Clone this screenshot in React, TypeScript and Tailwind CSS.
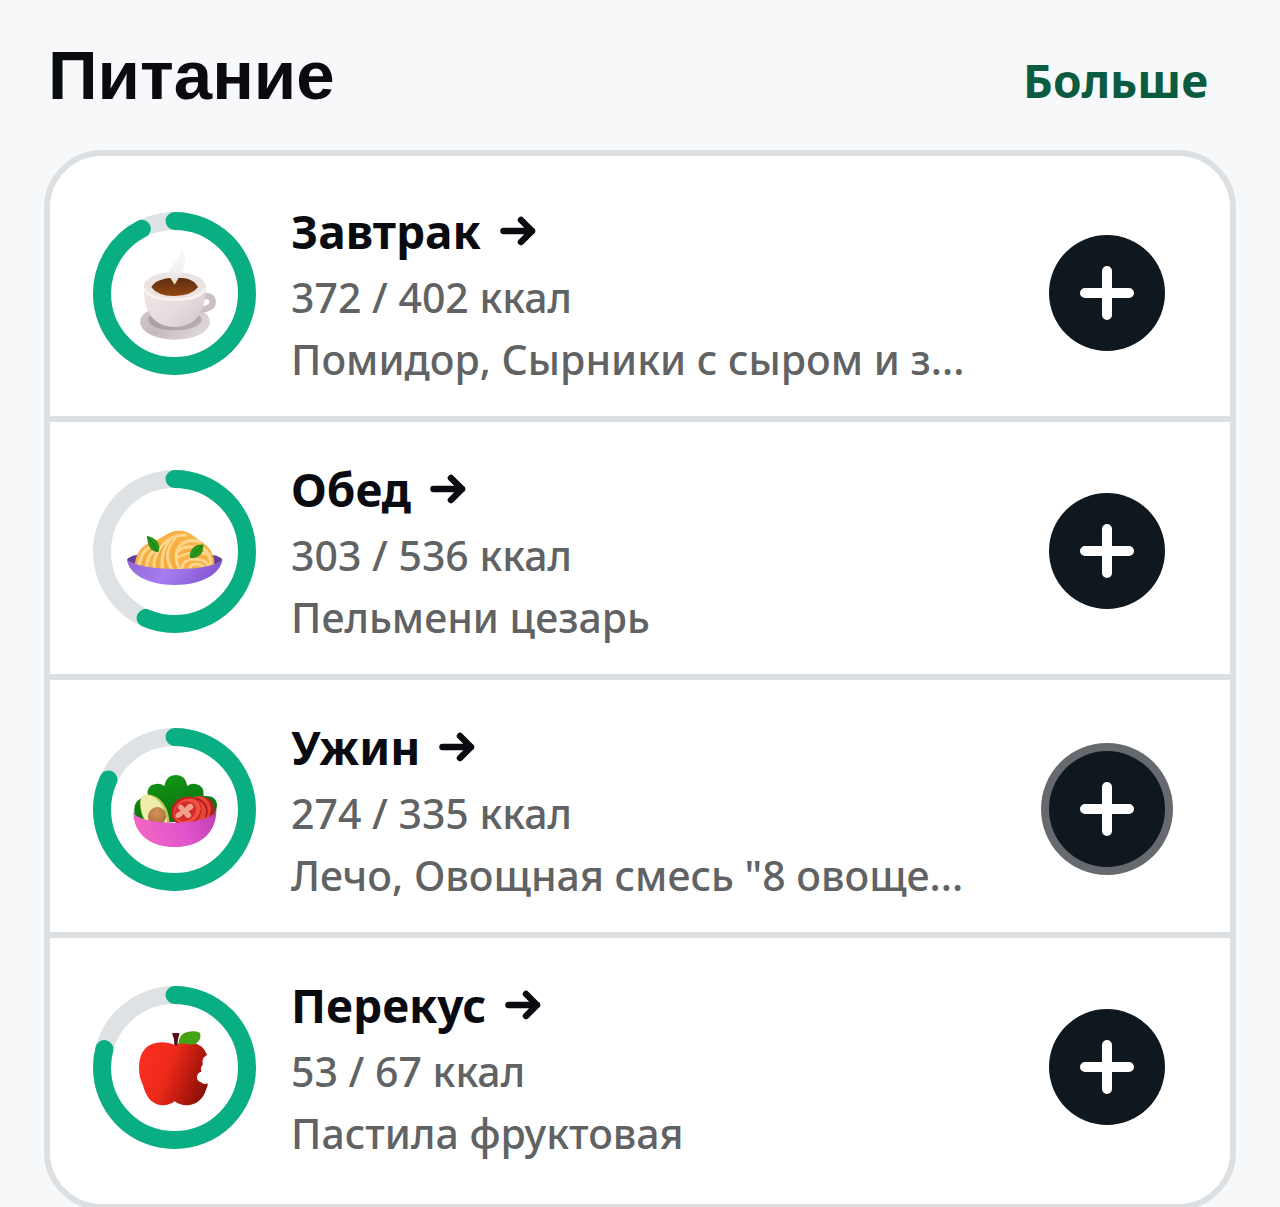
import type { ReactNode } from "react";

type Meal = {
  id: string;
  title: string;
  eaten: number;
  goal: number;
  foods: string;
  art: ReactNode;
  highlighted?: boolean;
};

function Coffee() {
  return (
    <svg viewBox="39 33 489 489" width="163" height="163">
      <defs>
        <linearGradient id="cup" x1="0" y1="0" x2="1" y2="1">
          <stop offset="0" stopColor="#f1e9ea" />
          <stop offset="0.6" stopColor="#e6dcde" />
          <stop offset="1" stopColor="#d0c4c7" />
        </linearGradient>
        <linearGradient id="saucer" x1="0" y1="0" x2="1" y2="0.4">
          <stop offset="0" stopColor="#d6cdce" />
          <stop offset="0.45" stopColor="#c4b9bb" />
          <stop offset="1" stopColor="#dcd5d6" />
        </linearGradient>
        <linearGradient id="brew" x1="0" y1="0" x2="0" y2="1">
          <stop offset="0" stopColor="#5c2d12" />
          <stop offset="1" stopColor="#934711" />
        </linearGradient>
        <linearGradient id="steam" x1="0" y1="0" x2="0" y2="1">
          <stop offset="0" stopColor="#f4f4f6" stopOpacity="0.5" />
          <stop offset="0.6" stopColor="#f3f3f5" />
          <stop offset="0.82" stopColor="#e9e4e4" />
          <stop offset="1" stopColor="#f0cfa6" />
        </linearGradient>
      </defs>
      <ellipse cx="285" cy="363" rx="105" ry="53" fill="url(#saucer)" />
      <ellipse cx="285" cy="356" rx="80" ry="32" fill="#8d7f83" opacity="0.45" />
      <path d="M360 291q32-14 38 8q4 24-38 27" fill="none" stroke="#cdc0c3" strokeWidth="19" strokeLinecap="round" />
      <path d="M191 258C191 232 235 213 284 213S377 232 377 258C377 334 346 378 284 378S191 334 191 258Z" fill="url(#cup)" />
      <ellipse cx="284" cy="256" rx="92" ry="42" fill="#ebe2e2" />
      <path d="M195 266q16 30 89 30t89-30" fill="none" stroke="#fbf4ee" strokeWidth="8" strokeLinecap="round" />
      <path d="M214 259Q226 232 284 230T354 259Q334 284 284 285T214 259Z" fill="url(#brew)" />
      <path d="M305 137Q301 168 285 183T263 222Q273 232 284 251Q296 230 310 207T305 137Z" fill="url(#steam)" />
    </svg>
  );
}

function Pasta() {
  return (
    <svg viewBox="39 42 489 489" width="163" height="163">
      <defs>
        <linearGradient id="plate" x1="0" y1="0" x2="1" y2="0.2">
          <stop offset="0" stopColor="#9367d8" />
          <stop offset="0.5" stopColor="#a67cf0" />
          <stop offset="1" stopColor="#8558d2" />
        </linearGradient>
        <clipPath id="noodles">
          <path d="M164 326Q172 266 222 257Q246 244 266 232Q302 212 340 239Q354 250 369 260Q402 281 404 326Q340 345 284 345T164 326Z" />
        </clipPath>
      </defs>
      <ellipse cx="284" cy="312" rx="143" ry="25" fill="#684196" />
      <g clipPath="url(#noodles)" fill="none" strokeLinecap="round">
        <path d="M150 200h270v160H150z" fill="#f8b144" stroke="none" />
        <g stroke="#fed58c" strokeWidth="9">
          <path d="M177 330Q184 278 217 272" />
          <path d="M199 335Q203 290 230 282" />
          <path d="M222 338Q218 304 246 270T316 238" />
          <path d="M248 342Q238 275 285 248" />
          <path d="M276 342Q248 293 277 257" />
          <path d="M298 340Q278 292 300 269T360 258" />
          <path d="M294 286Q312 268 352 274" />
          <path d="M295 303Q330 283 388 295" />
          <path d="M306 340Q306 309 345 310T383 334" />
          <path d="M328 341Q330 322 352 325T366 340" />
          <path d="M371 278Q395 299 392 334" />
        </g>
        <g stroke="#f0a233" strokeWidth="3">
          <path d="M262 341Q243 284 278 252" />
          <path d="M287 341Q265 286 289 262" />
          <path d="M235 340Q228 293 254 269" />
          <path d="M300 294Q338 279 370 285" />
          <path d="M189 334Q193 287 220 278" />
        </g>
      </g>
      <path d="M141 312Q180 338 284 339T427 312C421 354 365 387 284 387S147 354 141 312Z" fill="url(#plate)" />
      <path d="M201 239Q235 247 238 272Q238 283 234 289Q202 285 201 239Z" fill="#2c951b" />
      <path d="M203 242Q218 260 233 287" fill="none" stroke="#187510" strokeWidth="3" />
      <path d="M370 266Q371 306 333 306Q328 304 330 292Q337 264 370 266Z" fill="#2c951b" />
      <path d="M368 268Q350 289 332 304" fill="none" stroke="#187510" strokeWidth="3" />
    </svg>
  );
}

function Salad() {
  return (
    <svg viewBox="39 36 489 489" width="163" height="163">
      <defs>
        <linearGradient id="bowl" x1="0" y1="0.2" x2="1" y2="0">
          <stop offset="0" stopColor="#ef66c5" />
          <stop offset="0.55" stopColor="#e052cb" />
          <stop offset="1" stopColor="#bd3db0" />
        </linearGradient>
        <linearGradient id="lettuce" x1="0" y1="0" x2="0.4" y2="1">
          <stop offset="0" stopColor="#169b17" />
          <stop offset="1" stopColor="#07700e" />
        </linearGradient>
        <radialGradient id="pit" cx="0.4" cy="0.35" r="0.7">
          <stop offset="0" stopColor="#d39459" />
          <stop offset="1" stopColor="#a96d3a" />
        </radialGradient>
      </defs>
      <path d="M164 296Q158 254 187 247Q195 240 203 238Q199 207 227 204Q242 202 253 210Q258 178 287 177T322 210Q333 202 347 204Q373 208 371 240Q411 238 411 269Q410 286 400 302L284 318H190Z" fill="url(#lettuce)" />
      <path d="M180 259Q182 233 211 236C239 241 266 269 269 322H200Q180 298 180 259Z" fill="#b7c954" />
      <path d="M182 258Q184 233 208 238C233 244 260 276 261 324H201Q182 293 182 258Z" fill="#f0edab" />
      <ellipse cx="231" cy="301" rx="27" ry="28" transform="rotate(25 231 301)" fill="url(#pit)" />
      <ellipse cx="369" cy="282" rx="35" ry="39" fill="#b51f20" />
      <ellipse cx="357" cy="281" rx="35" ry="41" fill="#e74538" />
      <path d="M347 246Q392 263 377 304" fill="none" stroke="#ac191d" strokeWidth="5" />
      <ellipse cx="319" cy="285" rx="47" ry="42" transform="rotate(-33 319 285)" fill="#c51e20" />
      <ellipse cx="321" cy="285" rx="43" ry="35" transform="rotate(-33 321 285)" fill="#ee5144" />
      <ellipse cx="316" cy="286" rx="34" ry="28" transform="rotate(-33 316 286)" fill="#d52b29" />
      <path d="M296 269Q305 259 314 276Q329 256 338 267Q346 277 325 286Q341 300 328 305Q318 310 312 293Q291 315 287 301Q284 291 303 285Q290 277 296 269Z" fill="#f2a18e" />
      <path d="M160 278Q160 290 165 297Q197 320 284 320Q370 320 405 292Q408 284 409 278C411 346 365 393 284 393S156 346 160 278Z" fill="url(#bowl)" />
    </svg>
  );
}

function Apple() {
  return (
    <svg viewBox="39 45 489 489" width="163" height="163">
      <defs>
        <linearGradient id="peel" x1="0" y1="0.3" x2="1" y2="0.65">
          <stop offset="0" stopColor="#fb2e20" />
          <stop offset="0.4" stopColor="#ee2a1b" />
          <stop offset="0.8" stopColor="#ad170c" />
          <stop offset="1" stopColor="#8a1008" />
        </linearGradient>
      </defs>
      <path d="M284 222C262 211 232 211 210 222C187 233 177 260 177 290C177 312 182 328 189 343C198 382 220 403 249 403Q270 402 284 391Q298 402 319 403C350 402 370 383 378 356Q384 346 383 337Q371 342 363 334Q350 330 351 317Q352 305 364 302Q360 288 368 282Q366 266 372 259Q376 256 381 251Q369 220 338 215Q304 212 284 222Z" fill="url(#peel)" />
      <path d="M276 187Q286 185 299 187Q293 203 292 223H283Q284 203 276 187Z" fill="#541015" />
      <path d="M295 219Q297 188 322 183Q342 178 360 185Q365 201 353 214Q344 224 326 220Q309 216 295 219Z" fill="#45a215" />
    </svg>
  );
}

function ProgressRing({ meal }: { meal: Meal }) {
  return (
    <svg
      className="size-[163px] shrink-0"
      viewBox="0 0 163 163"
      role="img"
      aria-label={`${meal.title}: ${Math.round((meal.eaten / meal.goal) * 100)}%`}
    >
      <circle cx="81.5" cy="81.5" r="72.5" fill="none" stroke="#dee2e5" strokeWidth="18" />
      <circle
        cx="81.5"
        cy="81.5"
        r="72.5"
        fill="none"
        stroke="#0aae83"
        strokeWidth="18"
        strokeLinecap="round"
        pathLength={100}
        strokeDasharray={`${(meal.eaten / meal.goal) * 100} 100`}
        transform="rotate(-90 81.5 81.5)"
      />
      {meal.art}
    </svg>
  );
}

const meals: Meal[] = [
  { id: "breakfast", title: "Завтрак", eaten: 372, goal: 402, foods: "Помидор, Сырники с сыром и з...", art: <Coffee /> },
  { id: "lunch", title: "Обед", eaten: 303, goal: 536, foods: "Пельмени цезарь", art: <Pasta /> },
  { id: "dinner", title: "Ужин", eaten: 274, goal: 335, foods: 'Лечо, Овощная смесь "8 овоще...', art: <Salad />, highlighted: true },
  { id: "snack", title: "Перекус", eaten: 53, goal: 67, foods: "Пастила фруктовая", art: <Apple /> },
];

function MealRow({ meal }: { meal: Meal }) {
  return (
    <li className="flex items-center border-b-6 border-[#dde0e2] pt-8 pr-[65px] pb-[26px] pl-[43px] last:border-b-0">
      <ProgressRing meal={meal} />
      <div className="ml-[35px] min-w-0 flex-1">
        <h2 className="text-[46px] leading-[70px] font-bold text-[#090b10]">
          <a href={`#${meal.id}`} className="inline-flex items-center gap-[19px]">
            {meal.title}
            <svg className="h-[30px] w-9" viewBox="0 0 36 30" fill="none" stroke="currentColor" strokeWidth="6.5" strokeLinecap="round" strokeLinejoin="round" aria-hidden="true">
              <path d="M3.5 15H32M21 4l11 11-11 11" />
            </svg>
          </a>
        </h2>
        <p className="text-[41px] leading-[62px] font-medium text-[#606263]">
          {meal.eaten} / {meal.goal} ккал
        </p>
        <p className="truncate text-[41px] leading-[62px] font-medium text-[#606263]">{meal.foods}</p>
      </div>
      <button
        type="button"
        aria-label={`Добавить: ${meal.title}`}
        className={`ml-8 grid size-[116px] shrink-0 place-items-center rounded-full bg-[#10181f] text-white ${meal.highlighted ? "ring-8 ring-[#66696e]" : ""}`}
      >
        <svg className="size-[54px]" viewBox="0 0 54 54" fill="none" stroke="currentColor" strokeWidth="10" strokeLinecap="round" aria-hidden="true">
          <path d="M27 5v44M5 27h44" />
        </svg>
      </button>
    </li>
  );
}

export default function App() {
  return (
    <main className="min-h-screen bg-[#f6f8fa] px-11 pt-[34px] font-['Noto_Sans',sans-serif]">
      <header className="flex items-center justify-between pr-7 pl-1">
        <h1 className="font-['Liberation_Sans',Arial,sans-serif] text-[69px] leading-[84px] font-bold text-[#090b10]">Питание</h1>
        <a href="#more" className="pt-2 text-[46px] leading-[68px] font-bold text-[#0b5b40]">
          Больше
        </a>
      </header>
      <section className="mt-8 rounded-[58px] border-6 border-[#dde0e2] bg-white pt-2 pb-[14px]">
        <ul>
          {meals.map((meal) => (
            <MealRow key={meal.id} meal={meal} />
          ))}
        </ul>
      </section>
    </main>
  );
}
